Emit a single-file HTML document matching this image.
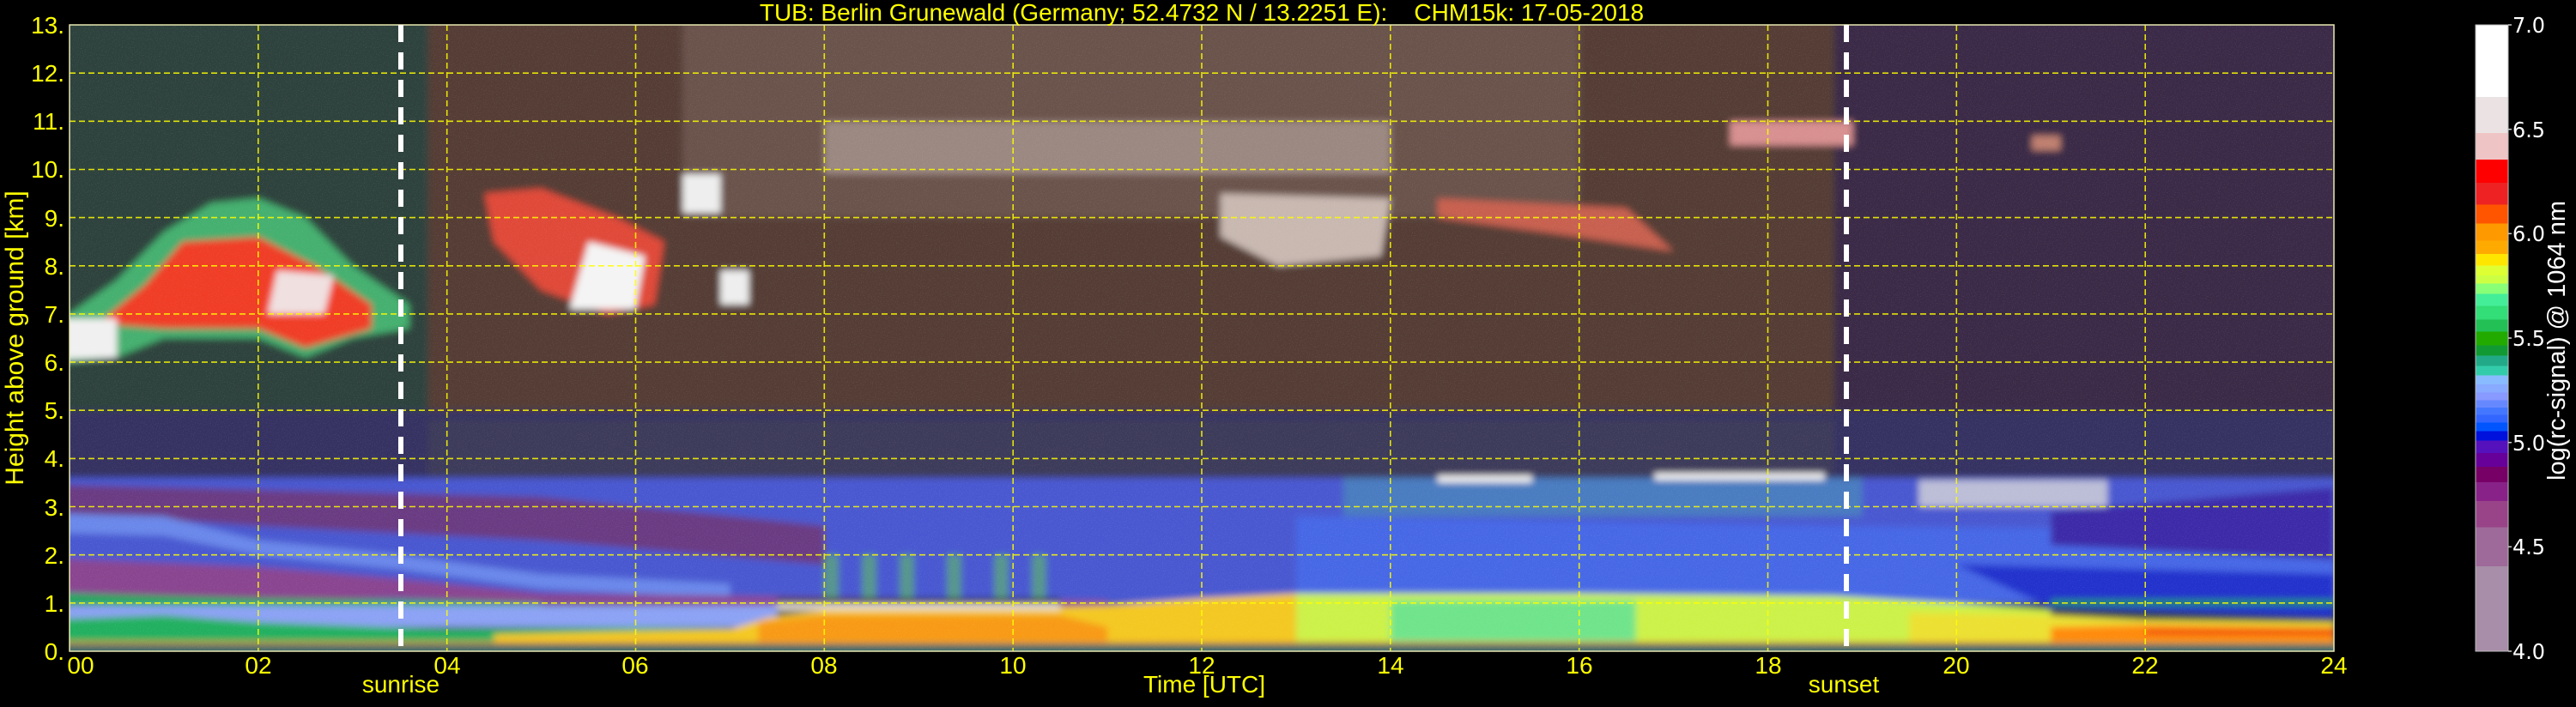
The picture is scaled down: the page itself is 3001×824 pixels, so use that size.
<!DOCTYPE html>
<html><head><meta charset="utf-8"><style>
html,body{margin:0;padding:0;background:#000;}
body{width:3001px;height:824px;overflow:hidden;position:relative;}
</style></head><body>
<svg width="3001" height="824" viewBox="0 0 3001 824" xmlns="http://www.w3.org/2000/svg" style="position:absolute;left:0;top:0">
<defs>
<clipPath id="pc"><rect x="81" y="29" width="2638" height="730"/></clipPath>
<filter id="bl" x="-5%" y="-5%" width="110%" height="110%"><feGaussianBlur stdDeviation="4"/></filter>
<filter id="nz" x="0" y="0" width="100%" height="100%">
<feTurbulence type="fractalNoise" baseFrequency="0.9" numOctaves="1" seed="3"/>
<feColorMatrix type="matrix" values="0 0 0 0 1  0 0 0 0 1  0 0 0 0 1  3 0 0 0 -1.6"/>
</filter>
<linearGradient id="cb" x1="0" y1="0" x2="0" y2="1">
<stop offset="0" stop-color="#fff"/><stop offset="11.53%" stop-color="#fff"/>
<stop offset="11.53%" stop-color="#ebe3e3"/><stop offset="17.29%" stop-color="#ebe3e3"/>
<stop offset="17.29%" stop-color="#efc4c4"/><stop offset="21.54%" stop-color="#efc4c4"/>
<stop offset="21.54%" stop-color="#ff0000"/><stop offset="25.22%" stop-color="#ff0000"/>
<stop offset="25.22%" stop-color="#ee2222"/><stop offset="28.67%" stop-color="#ee2222"/>
<stop offset="28.67%" stop-color="#ff5500"/><stop offset="31.70%" stop-color="#ff5500"/>
<stop offset="31.70%" stop-color="#ff9900"/><stop offset="34.44%" stop-color="#ff9900"/>
<stop offset="34.44%" stop-color="#ffaa00"/><stop offset="36.60%" stop-color="#ffaa00"/>
<stop offset="36.60%" stop-color="#ffe600"/><stop offset="38.40%" stop-color="#ffe600"/>
<stop offset="38.40%" stop-color="#ddff33"/><stop offset="39.99%" stop-color="#ddff33"/>
<stop offset="39.99%" stop-color="#ccff44"/><stop offset="41.28%" stop-color="#ccff44"/>
<stop offset="41.28%" stop-color="#88ff77"/><stop offset="42.94%" stop-color="#88ff77"/>
<stop offset="42.94%" stop-color="#44ee99"/><stop offset="44.88%" stop-color="#44ee99"/>
<stop offset="44.88%" stop-color="#33dd77"/><stop offset="47.05%" stop-color="#33dd77"/>
<stop offset="47.05%" stop-color="#22c055"/><stop offset="48.99%" stop-color="#22c055"/>
<stop offset="48.99%" stop-color="#22aa00"/><stop offset="51.15%" stop-color="#22aa00"/>
<stop offset="51.15%" stop-color="#119933"/><stop offset="52.81%" stop-color="#119933"/>
<stop offset="52.81%" stop-color="#22aa88"/><stop offset="54.47%" stop-color="#22aa88"/>
<stop offset="54.47%" stop-color="#33ccaa"/><stop offset="55.98%" stop-color="#33ccaa"/>
<stop offset="55.98%" stop-color="#88bbff"/><stop offset="57.42%" stop-color="#88bbff"/>
<stop offset="57.42%" stop-color="#88aaff"/><stop offset="58.72%" stop-color="#88aaff"/>
<stop offset="58.72%" stop-color="#8899ff"/><stop offset="59.94%" stop-color="#8899ff"/>
<stop offset="59.94%" stop-color="#6688ff"/><stop offset="61.10%" stop-color="#6688ff"/>
<stop offset="61.10%" stop-color="#4477ff"/><stop offset="62.25%" stop-color="#4477ff"/>
<stop offset="62.25%" stop-color="#3366ff"/><stop offset="63.47%" stop-color="#3366ff"/>
<stop offset="63.47%" stop-color="#0055ff"/><stop offset="64.84%" stop-color="#0055ff"/>
<stop offset="64.84%" stop-color="#0011dd"/><stop offset="66.35%" stop-color="#0011dd"/>
<stop offset="66.35%" stop-color="#5511bb"/><stop offset="68.37%" stop-color="#5511bb"/>
<stop offset="68.37%" stop-color="#660099"/><stop offset="70.53%" stop-color="#660099"/>
<stop offset="70.53%" stop-color="#770066"/><stop offset="72.98%" stop-color="#770066"/>
<stop offset="72.98%" stop-color="#882288"/><stop offset="76.01%" stop-color="#882288"/>
<stop offset="76.01%" stop-color="#994488"/><stop offset="80.19%" stop-color="#994488"/>
<stop offset="80.19%" stop-color="#9e6a9a"/><stop offset="86.46%" stop-color="#9e6a9a"/>
<stop offset="86.46%" stop-color="#a88ea8"/><stop offset="100%" stop-color="#a88ea8"/>
</linearGradient>
</defs>

<g clip-path="url(#pc)">
<g filter="url(#bl)">
<g transform="translate(81,759) scale(109.917,-56.154)">
<rect x="-1" y="-1" width="26" height="15" fill="#34443f"/>
<rect x="-1" y="5" width="4.8" height="9" fill="#2f423c"/>
<rect x="3.8" y="4.5" width="14.9" height="9.5" fill="#553e36"/>
<rect x="6.5" y="9" width="9.5" height="5" fill="#6a524c"/>
<rect x="18.7" y="4" width="6" height="10" fill="#3a2c46"/>
<rect x="-1" y="3.4" width="26" height="1.6" fill="#363262"/>
<rect x="3.8" y="3.6" width="14.9" height="1.2" fill="#3c3a5a"/>
<!-- lower general -->
<rect x="-1" y="1" width="26" height="2.6" fill="#4a58d0"/>
<polygon fill="#6a3a82" points="-1,3.5 5,3.2 8,2.6 8,1.8 5,2.3 2,2.6 -1,3.0"/>
<polygon fill="#6a88ea" points="-1,2.9 1,2.8 2,2.3 3.5,2.0 5,1.6 7,1.4 7,1.1 5,1.3 3.5,1.7 2,2.0 1,2.4 -1,2.5"/>
<polygon fill="#8a4490" points="-1,2.0 2,1.75 3.5,1.5 5,1.2 7,1.15 11,1.05 11,0.85 7,0.95 5,1.0 3.5,1.1 2,1.05 -1,1.3"/>
<polygon fill="#1fa858" points="-1,1.25 2,1.1 4,1.05 5,1.0 5,0.85 2,0.9 -1,1.0"/>
<rect x="-1" y="0.5" width="8.5" height="0.45" fill="#8ca2f4"/>
<polygon fill="#22b060" points="-1,0.15 -1,0.6 1,0.75 2,0.6 4,0.45 6,0.5 7.5,0.45 7.5,0.15"/>
<polygon fill="#4668e6" points="13,2.8 18.7,2.6 24,2.5 24,1 13,1"/>
<rect x="13.5" y="2.8" width="5.5" height="0.8" fill="#4a7cc0"/>
<polygon fill="#3c2ca8" points="21,2.9 24,3.4 24,1.9 21,2.2"/>
<polygon fill="#2030cc" points="20,1.8 24,1.6 24,0.7 21,0.9"/>
<!-- surface aerosol -->
<polygon fill="#f4c820" points="4.5,0.15 4.5,0.35 7,0.45 7.4,0.7 8,0.85 10,0.9 11,0.95 12,1.1 13,1.2 13,0.15"/>
<polygon fill="#f89a18" points="7.3,0.2 7.3,0.6 8,0.75 10.5,0.75 11,0.5 11,0.2"/>
<polygon fill="#ccf248" points="13,0.15 13,1.2 16,1.2 18.7,1.15 20,1.0 21,0.85 21,0.15"/>
<rect x="14" y="0.2" width="2.6" height="0.85" fill="#58e09c" opacity="0.8"/>
<polygon fill="#ece030" points="19.5,0.15 19.5,0.8 21,0.75 22,0.65 24,0.6 24,0.15"/>
<polygon fill="#ff8a10" points="21,0.2 21,0.5 22,0.55 24,0.5 24,0.2"/>
<rect x="22" y="0.35" width="2" height="0.1" fill="#ee4010"/>
<rect x="21" y="0.95" width="3" height="0.12" fill="#209060"/>
<rect x="-1" y="-1" width="26" height="1.15" fill="#3a6a6c"/>
<rect x="-1" y="0.15" width="26" height="0.05" fill="#f0a000"/>
<!-- spikes / white layers -->
<g fill="#60c060" opacity="0.6">
<rect x="8.0" y="1.0" width="0.15" height="1.0"/><rect x="8.4" y="1.0" width="0.15" height="1.0"/>
<rect x="8.8" y="1.0" width="0.15" height="1.0"/><rect x="9.3" y="1.0" width="0.15" height="1.0"/>
<rect x="9.8" y="1.0" width="0.15" height="1.0"/><rect x="10.2" y="1.0" width="0.15" height="1.0"/>
</g>
<rect x="7.5" y="0.85" width="3" height="0.15" fill="#e0d8d0"/>
<rect x="7.5" y="1.0" width="3" height="0.1" fill="#202020"/>
<rect x="14.5" y="3.5" width="1.0" height="0.15" fill="#f0f0f0"/>
<rect x="16.8" y="3.55" width="1.8" height="0.15" fill="#f0f0f0"/>
<rect x="19.6" y="3.0" width="2" height="0.55" fill="#d8d8d8" opacity="0.8"/>
<!-- clouds -->
<polygon fill="#44b070" points="-1,5.9 0,7 0.5,7.7 1,8.7 1.5,9.3 2,9.4 2.5,9.0 3,8.0 3.6,7.2 3.6,6.7 3,6.5 2.5,6.1 2,6.5 1,6.5 0.5,6.1 -1,5.8"/>
<polygon fill="#f03c28" points="0.3,6.8 0.8,7.6 1.2,8.5 2,8.6 2.6,8.0 3.2,7.2 3.2,6.7 2.5,6.3 2,6.7 1,6.7"/>
<polygon fill="#f0f0f0" points="-1,6.0 0.5,6.1 0.5,6.9 -1,6.9"/>
<polygon fill="#f0e0e0" points="2.1,7.0 2.7,7.0 2.8,7.8 2.2,7.9"/>
<polygon fill="#e04a38" points="4.4,9.5 5,9.6 5.8,9.0 6.3,8.5 6.2,7.2 5.7,7.0 5,7.5 4.5,8.5"/>
<polygon fill="#f4f4f4" points="5.3,7.1 6.0,7.1 6.1,8.2 5.5,8.5"/>
<rect x="6.5" y="9.1" width="0.4" height="0.8" fill="#eeeeee"/>
<rect x="6.9" y="7.2" width="0.3" height="0.7" fill="#eeeeee"/>
<rect x="8" y="9.9" width="6" height="1.1" fill="#b0a098" opacity="0.7"/>
<polygon fill="#c8b8b0" points="12.2,9.5 14,9.4 13.9,8.2 12.8,8.0 12.2,8.6"/>
<polygon fill="#c86050" points="14.5,9.4 16.5,9.2 17.0,8.3 16,8.6 14.5,9.0"/>
<rect x="17.6" y="10.5" width="1.3" height="0.5" fill="#d89090"/>
<rect x="20.8" y="10.4" width="0.3" height="0.3" fill="#c08070"/>
</g>
</g>
<rect x="81" y="29" width="2638" height="730" filter="url(#nz)" opacity="0.12"/>
</g>

<!-- grid -->
<g stroke="#ffff00" stroke-width="1.6" stroke-dasharray="7,4" opacity="0.85">
<line x1="81" x2="2719" y1="702.8" y2="702.8"/><line x1="81" x2="2719" y1="646.7" y2="646.7"/>
<line x1="81" x2="2719" y1="590.5" y2="590.5"/><line x1="81" x2="2719" y1="534.4" y2="534.4"/>
<line x1="81" x2="2719" y1="478.2" y2="478.2"/><line x1="81" x2="2719" y1="422.1" y2="422.1"/>
<line x1="81" x2="2719" y1="365.9" y2="365.9"/><line x1="81" x2="2719" y1="309.8" y2="309.8"/>
<line x1="81" x2="2719" y1="253.6" y2="253.6"/><line x1="81" x2="2719" y1="197.5" y2="197.5"/>
<line x1="81" x2="2719" y1="141.3" y2="141.3"/><line x1="81" x2="2719" y1="85.2" y2="85.2"/>
<line y1="29" y2="759" x1="300.8" x2="300.8"/><line y1="29" y2="759" x1="520.7" x2="520.7"/>
<line y1="29" y2="759" x1="740.5" x2="740.5"/><line y1="29" y2="759" x1="960.3" x2="960.3"/>
<line y1="29" y2="759" x1="1180.2" x2="1180.2"/><line y1="29" y2="759" x1="1400" x2="1400"/>
<line y1="29" y2="759" x1="1619.8" x2="1619.8"/><line y1="29" y2="759" x1="1839.7" x2="1839.7"/>
<line y1="29" y2="759" x1="2059.5" x2="2059.5"/><line y1="29" y2="759" x1="2279.3" x2="2279.3"/>
<line y1="29" y2="759" x1="2499.2" x2="2499.2"/>
</g>
<rect x="81" y="29" width="2638" height="730" fill="none" stroke="#e8e8b0" stroke-width="1.5"/>
<g stroke="#ffffff" stroke-width="6" stroke-dasharray="20,12">
<line x1="467" x2="467" y1="29" y2="759"/>
<line x1="2151" x2="2151" y1="29" y2="759"/>
</g>

<!-- colorbar -->
<rect x="2884" y="29" width="38" height="730" fill="url(#cb)"/>
<rect x="2884" y="29" width="38" height="730" fill="none" stroke="#bbb" stroke-width="1"/>
<g stroke="#ccc" stroke-width="1.5">
<line x1="2922" x2="2926" y1="29" y2="29"/><line x1="2922" x2="2926" y1="150.7" y2="150.7"/>
<line x1="2922" x2="2926" y1="272.3" y2="272.3"/><line x1="2922" x2="2926" y1="394" y2="394"/>
<line x1="2922" x2="2926" y1="515.7" y2="515.7"/><line x1="2922" x2="2926" y1="637.3" y2="637.3"/>
<line x1="2922" x2="2926" y1="759" y2="759"/>
</g>
<g font-family="'DejaVu Sans','Liberation Sans',sans-serif" font-size="25" fill="#ffffff">
<text x="2927" y="38" textLength="38" lengthAdjust="spacingAndGlyphs">7.0</text>
<text x="2927" y="160" textLength="38" lengthAdjust="spacingAndGlyphs">6.5</text>
<text x="2927" y="281" textLength="38" lengthAdjust="spacingAndGlyphs">6.0</text>
<text x="2927" y="403" textLength="38" lengthAdjust="spacingAndGlyphs">5.5</text>
<text x="2927" y="525" textLength="38" lengthAdjust="spacingAndGlyphs">5.0</text>
<text x="2927" y="646" textLength="38" lengthAdjust="spacingAndGlyphs">4.5</text>
<text x="2927" y="768" textLength="38" lengthAdjust="spacingAndGlyphs">4.0</text>
</g>
<text transform="translate(2988,397) rotate(-90)" text-anchor="middle" font-family="'Liberation Sans',sans-serif" font-size="29" fill="#ffffff">log(rc-signal) @ 1064 nm</text>

<!-- axes labels -->
<g font-family="'Liberation Sans',sans-serif" font-size="28" fill="#ffff00">
<g text-anchor="end">
<text x="75" y="39">13.</text><text x="75" y="95">12.</text><text x="75" y="151">11.</text>
<text x="75" y="207">10.</text><text x="75" y="264">9.</text><text x="75" y="320">8.</text>
<text x="75" y="376">7.</text><text x="75" y="432">6.</text><text x="75" y="488">5.</text>
<text x="75" y="544">4.</text><text x="75" y="601">3.</text><text x="75" y="657">2.</text>
<text x="75" y="713">1.</text><text x="75" y="769">0.</text>
</g>
<g text-anchor="middle">
<text x="94" y="785">00</text><text x="301" y="785">02</text><text x="521" y="785">04</text>
<text x="740" y="785">06</text><text x="960" y="785">08</text><text x="1180" y="785">10</text>
<text x="1400" y="785">12</text><text x="1620" y="785">14</text><text x="1840" y="785">16</text>
<text x="2060" y="785">18</text><text x="2279" y="785">20</text><text x="2499" y="785">22</text>
<text x="2719" y="785">24</text>
<text x="467" y="807">sunrise</text>
<text x="2148" y="807">sunset</text>
<text x="1403" y="807">Time [UTC]</text>
</g>
<text transform="translate(27,394) rotate(-90)" text-anchor="middle" font-size="30">Height above ground [km]</text>
<text x="1400" y="24" text-anchor="middle" font-size="28" xml:space="preserve">TUB: Berlin Grunewald (Germany; 52.4732 N / 13.2251 E):    CHM15k: 17-05-2018</text>
</g>
</svg>
</body></html>
